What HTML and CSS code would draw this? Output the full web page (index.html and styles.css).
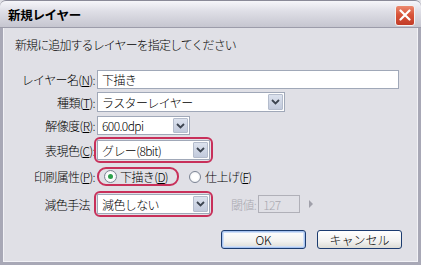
FILE: index.html
```html
<!DOCTYPE html>
<html lang="ja">
<head>
    <meta charset="UTF-8">
    <title>新規レイヤー</title>
    <link rel="stylesheet" href="styles.css">
</head>
<body>
    <div class="window">
        <div class="titlebar">
            <span class="title">新規レイヤー</span>
            <span class="close">
                <svg width="12" height="12" viewBox="0 0 12 12"><path d="M1.5 1.5 L10.5 10.5 M10.5 1.5 L1.5 10.5" stroke="#fff" stroke-width="2.2" stroke-linecap="round"/></svg>
            </span>
        </div>
        <div class="frame">
            <p class="intro">新規に追加するレイヤーを指定してください</p>

            <div class="row row-name">
                <span class="lbl">レイヤー名(<u>N</u>):</span>
                <div class="field text w-name">下描き</div>
            </div>
            <div class="row row-kind">
                <span class="lbl">種類(<u>T</u>):</span>
                <div class="field select w-kind">ラスターレイヤー<span class="drop"><svg width="9" height="6" viewBox="0 0 9 6"><path d="M1 1 L4.5 4.5 L8 1" fill="none" stroke="#3c4450" stroke-width="1.8"/></svg></span></div>
            </div>
            <div class="row row-res">
                <span class="lbl">解像度(<u>R</u>):</span>
                <div class="field select w-res">600.0dpi<span class="drop"><svg width="9" height="6" viewBox="0 0 9 6"><path d="M1 1 L4.5 4.5 L8 1" fill="none" stroke="#3c4450" stroke-width="1.8"/></svg></span></div>
            </div>
            <div class="row row-color">
                <span class="lbl">表現色(<u>C</u>):</span>
                <div class="mark">
                    <div class="field select w-mid">グレー(8bit)<span class="drop"><svg width="9" height="6" viewBox="0 0 9 6"><path d="M1 1 L4.5 4.5 L8 1" fill="none" stroke="#3c4450" stroke-width="1.8"/></svg></span></div>
                </div>
            </div>
            <div class="row row-print">
                <span class="lbl">印刷属性(<u>P</u>):</span>
                <div class="mark mark-radio">
                    <span class="radio checked"></span>
                    <span>下描き(<u>D</u>)</span>
                </div>
                <span class="radio second"></span>
                <span>仕上げ(<u>F</u>)</span>
            </div>
            <div class="row row-reduce">
                <span class="lbl lbl-plain">減色手法</span>
                <div class="mark">
                    <div class="field select w-mid">減色しない<span class="drop"><svg width="9" height="6" viewBox="0 0 9 6"><path d="M1 1 L4.5 4.5 L8 1" fill="none" stroke="#3c4450" stroke-width="1.8"/></svg></span></div>
                </div>
                <span class="muted thr-lbl">閾値:</span>
                <div class="field thr">127</div>
                <span class="arrow"></span>
            </div>

            <div class="buttons">
                <button class="btn default">OK</button>
                <button class="btn">キャンセル</button>
            </div>
        </div>
    </div>
</body>
</html>
```

FILE: styles.css
```css
body {
    margin: 0;
    background: #e0e0e6;
    font-family: "Noto Sans CJK JP", "DejaVu Sans", sans-serif;
    font-size: 12px;
    font-weight: 300;
    color: #000;
}
u {
    text-decoration: underline;
    text-underline-offset: 1px;
}
.window {
    width: 421px;
    height: 265px;
    display: flex;
    flex-direction: column;
    overflow: hidden;
}
.titlebar {
    height: 28px;
    flex: none;
    display: flex;
    align-items: center;
    justify-content: space-between;
    padding: 0 6px 0 8px;
    box-sizing: border-box;
    background: linear-gradient(to bottom, #f6f6fa 0%, #dedee6 40%, #c6c6d0 100%);
    border-top: 1px solid #8a8a98;
    border-bottom: 1px solid #9c9caa;
    border-radius: 6px 6px 0 0;
}
.title {
    font-weight: bold;
    font-size: 12.5px;
    letter-spacing: -0.3px;
}
.close {
    width: 20px;
    height: 21px;
    box-sizing: border-box;
    border: 1px solid #f2f2f2;
    border-radius: 3px;
    background: linear-gradient(to bottom, #ec8a70 0%, #d8553a 45%, #c23c28 100%);
    display: flex;
    align-items: center;
    justify-content: center;
    margin-top: 2px;
}
.frame {
    flex: 1;
    border: 3px solid #a8a8b6;
    border-top: 0;
    box-shadow: inset 1px 0 0 #f2f2f6, inset -1px 0 0 #f2f2f6, inset 0 -1px 0 #f2f2f6;
    background: #e0e0e6;
    padding-top: 8px;
}
.intro {
    margin: 0 0 0 12px;
    line-height: 17px;
    letter-spacing: -0.9px;
}
.row {
    display: flex;
    align-items: center;
    white-space: nowrap;
    letter-spacing: -0.6px;
}
.row-name { height: 19px; margin-top: 17px; }
.row-kind { height: 20px; margin-top: 3px; }
.row-res { height: 19px; margin-top: 4px; }
.row-color { height: 20px; margin-top: 5px; }
.row-print { height: 19px; margin-top: 7px; }
.row-reduce { height: 20px; margin-top: 8px; }
.lbl {
    width: 92px;
    flex: none;
    text-align: right;
    margin-right: 2px;
}
.lbl-plain {
    width: 87px;
    margin-right: 7px;
}
.field {
    height: 100%;
    box-sizing: border-box;
    border: 1px solid #a0a8b8;
    background: #fff;
    display: flex;
    align-items: center;
    padding-left: 4px;
}
.select {
    justify-content: space-between;
    padding-right: 1px;
}
.drop {
    width: 15px;
    height: calc(100% - 2px);
    box-sizing: border-box;
    border: 1px solid #b4bccc;
    border-radius: 1px;
    background: linear-gradient(to bottom, #dce2ee, #c2cadc);
    display: flex;
    align-items: center;
    justify-content: center;
}
.w-name { width: 302px; }
.w-kind { width: 188px; }
.w-res { width: 93px; height: 19px; }
.w-mid { width: 113px; height: 20px; }
.mark {
    margin-left: -3px;
    border: 2px solid #c8305a;
    border-radius: 6px;
    padding: 1px;
    display: flex;
    align-items: center;
}
.mark-radio {
    margin-left: 0;
    height: 19px;
    box-sizing: border-box;
    padding: 0 9px 0 5px;
    border-radius: 9px;
    gap: 3px;
}
.radio {
    width: 13px;
    height: 13px;
    box-sizing: border-box;
    border-radius: 50%;
    border: 1px solid #7c8494;
    background: radial-gradient(circle, #ffffff 40%, #e4e6ec 100%);
    display: inline-flex;
    align-items: center;
    justify-content: center;
    flex: none;
}
.radio.checked::after {
    content: "";
    width: 5px;
    height: 5px;
    border-radius: 50%;
    background: #2ca04c;
}
.radio.second {
    width: 12px;
    height: 12px;
    margin: 0 4px 0 10px;
}
.muted {
    color: #a8a8b0;
}
.thr-lbl {
    margin-left: 18px;
}
.thr {
    width: 42px;
    height: 18px;
    margin-left: 2px;
    border-color: #b0b0b8;
    background: #e0e0e6;
    color: #a8a8b0;
}
.arrow {
    width: 0;
    height: 0;
    margin-left: 9px;
    border-top: 4px solid transparent;
    border-bottom: 4px solid transparent;
    border-left: 4px solid #a0a0aa;
}
.buttons {
    display: flex;
    justify-content: flex-end;
    gap: 11px;
    padding-right: 16px;
    margin-top: 16px;
}
.btn {
    width: 85px;
    height: 19px;
    font-family: inherit;
    font-size: 12px;
    font-weight: 300;
    color: #000;
    border: 1px solid #1c3c70;
    border-radius: 3px;
    background: linear-gradient(to bottom, #ffffff 0%, #f2f2f0 60%, #dcdcd6 100%);
    padding: 0;
    line-height: 15px;
}
.btn.default {
    box-shadow: inset 0 0 0 1px #a8c4f0, inset 0 0 0 2px #d0dff6;
}
```
